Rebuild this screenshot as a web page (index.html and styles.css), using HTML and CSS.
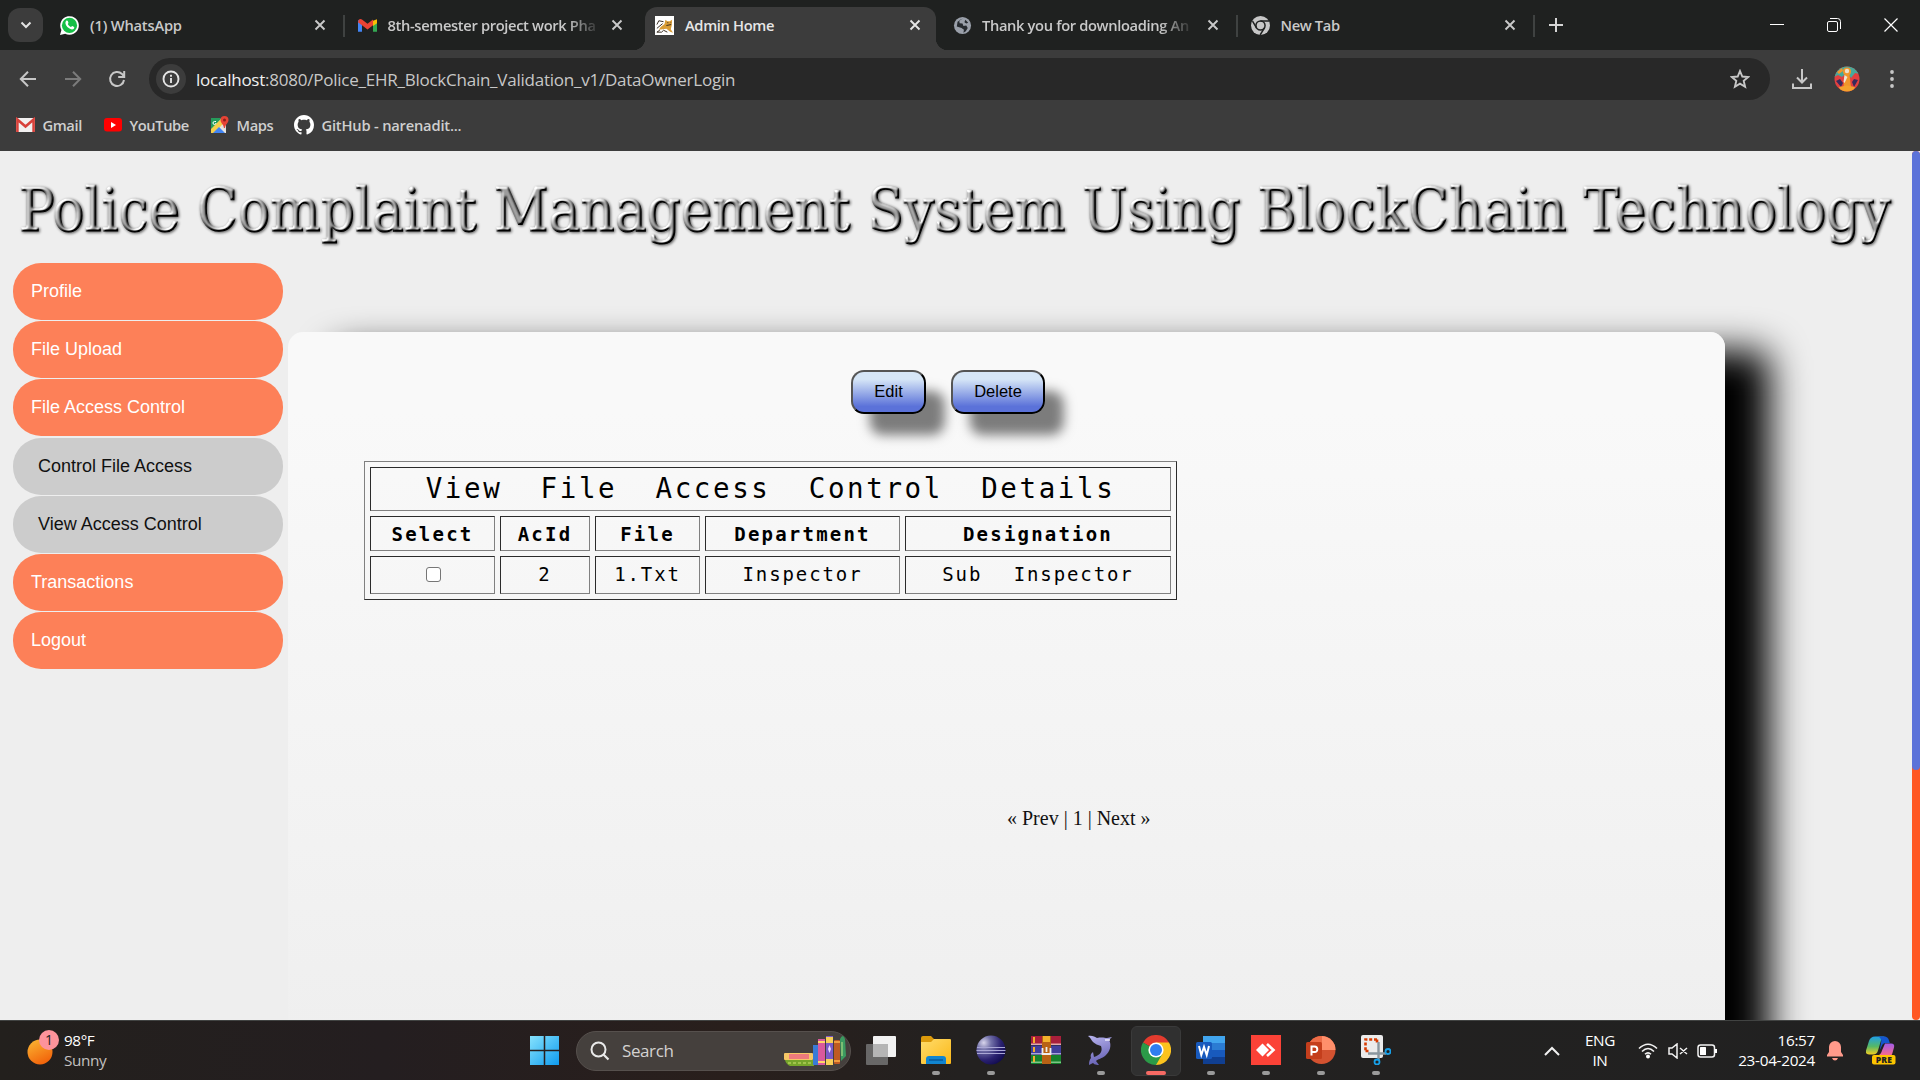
FILE: index.html
```html
<!DOCTYPE html>
<html lang="en">
<head>
<meta charset="utf-8">
<title>Admin Home</title>
<link rel="stylesheet" href="styles.css">
</head>
<body>
<svg class="defs" width="0" height="0" aria-hidden="true">
  <defs>
    <symbol id="x" viewBox="0 0 12 12"><path d="M1.5 1.5l9 9M10.5 1.5l-9 9" fill="none" stroke="currentColor" stroke-width="1.9"/></symbol>
    <symbol id="chrome-mono" viewBox="0 0 20 20"><circle cx="10" cy="10" r="10" fill="#c7c7c7"/><circle cx="10" cy="10" r="4.8" fill="none" stroke="#1f2120" stroke-width="1.6"/><path d="M10 5.2h9M5.8 12.4L1.6 5.4M14.2 12.4L9.6 20" stroke="#1f2120" stroke-width="1.6"/></symbol>
    <linearGradient id="sun" x2=".5" y2="1"><stop stop-color="#fbb934"/><stop offset="1" stop-color="#f2660c"/></linearGradient>
    <linearGradient id="win" x2="1" y2="1"><stop stop-color="#86e2fd"/><stop offset="1" stop-color="#0f9bee"/></linearGradient>
    <linearGradient id="fold" x2="1" y2="1"><stop stop-color="#ffdc6b"/><stop offset="1" stop-color="#fbb818"/></linearGradient>
    <radialGradient id="ecl" cx=".25" cy=".25" r=".85"><stop stop-color="#d8d5ec"/><stop offset=".3" stop-color="#7271a8"/><stop offset=".7" stop-color="#2a2170"/><stop offset="1" stop-color="#120c50"/></radialGradient>
    <linearGradient id="dol" x2=".3" y2="1"><stop stop-color="#b9b5ee"/><stop offset="1" stop-color="#6964b6"/></linearGradient>
    <linearGradient id="copA" x2="0" y2="1"><stop stop-color="#1fa0e8"/><stop offset=".55" stop-color="#55b866"/><stop offset="1" stop-color="#f2cd22"/></linearGradient>
    <linearGradient id="copB" x2="0" y2="1"><stop stop-color="#a15ce8"/><stop offset="1" stop-color="#fb6a8b"/></linearGradient>
  </defs>
</svg>

<header class="tabstrip">
  <button class="tab-search"><svg width="12" height="8" viewBox="0 0 12 8"><path d="M1.5 1.5L6 6l4.500-4.500" fill="none" stroke="#e3e3e3" stroke-width="2"/></svg></button>
  <div class="tab first">
    <svg class="fav" viewBox="0 0 20 20"><path d="M0 20l1.500-5.200A9.800 9.800 0 1 1 5.400 18.600z" fill="#fff"/><circle cx="10" cy="9.900" r="8" fill="#16c047"/><path d="M6.400 5.200c.6-.7 1.500-.6 1.800.1l.7 1.700c.1.400-.7 1.100-.7 1.500.7 1.500 1.800 2.500 3.300 3.100.5 0 1-1.200 1.500-1l1.800.9c.5.400.1 1.700-.5 2.200-1.600 1.200-4 .1-5.800-1.500C6.300 10.200 4.800 7.200 6.400 5.200z" fill="#fff"/></svg>
    <span class="tab-label l1">(1) WhatsApp</span><svg class="tab-x"><use href="#x"/></svg>
  </div>
  <div class="tab">
    <svg class="fav" viewBox="0 0 20 20"><path d="M0 4v12.500h4.200V8z" fill="#4285f4"/><path d="M20 4v12.500h-4.200V8z" fill="#34a853"/><path d="M15.800 5l4.200-1.500V7.500l-4.200 3z" fill="#fbbc04"/><path d="M1 3.800C2 2.600 3.500 3 4.200 3.700L10 8.200l5.800-4.500v6.100L10 14.200 4.200 9.800 0 6.500z" fill="#ea4335"/></svg>
    <span class="tab-label l2 fade">8th-semester project work Pha</span><svg class="tab-x"><use href="#x"/></svg>
  </div>
  <div class="tab active">
    <svg class="fav" viewBox="0 0 20 20"><path d="M0 0h20v20H0z" fill="#fff"/><path d="M11 4l2 1.500h2.500L18 4l-.4 6-1 4 2.400 3.500-3-1-4-3-8 1 2-3 4-3z" fill="#d99c35"/><path d="M2 13l6-5M2 9l2-4 5 1M5 15l-3 2h5l2-2 4 2M17 9l-5 1M13 7h1M16.500 7h.5" stroke="#34281d" fill="none"/></svg>
    <span class="tab-label l3">Admin Home</span><svg class="tab-x"><use href="#x"/></svg>
  </div>
  <div class="tab">
    <svg class="fav" viewBox="0 0 20 20"><circle cx="10" cy="10" r="9" fill="#9aa0aa"/><path d="M10.500 2.500l-4 2 .5 3 3 .5 1 2.500 3-.5 1.500 2.500-2 3.500-2.500 1.500.5-3-2.500-2-5-1.500.8-5zM13 4l3 3-2 1-2-1.500z" fill="#262b30"/></svg>
    <span class="tab-label l4 fade">Thank you for downloading An</span><svg class="tab-x"><use href="#x"/></svg>
  </div>
  <div class="tab">
    <svg class="fav"><use href="#chrome-mono"/></svg>
    <span class="tab-label l5">New Tab</span><svg class="tab-x"><use href="#x"/></svg>
  </div>
  <svg class="plus" viewBox="0 0 14 14"><path d="M7 0v14M0 7h14" stroke="#d5d5d5" stroke-width="2"/></svg>
  <div class="winctl">
    <svg width="14" height="14"><path d="M0 6.500h14" stroke="#fff"/></svg>
    <svg width="14" height="14"><rect x=".5" y="3.500" width="10" height="10" rx="1.500" fill="none" stroke="#fff"/><path d="M3 .5h7.500a3 3 0 0 1 3 3V11" fill="none" stroke="#fff"/></svg>
    <svg width="14" height="14"><path d="M.5 .5l13 13M13.500 .5l-13 13" stroke="#fff" stroke-width="1.200"/></svg>
  </div>
</header>

<nav class="toolbar">
  <svg class="nav-i" viewBox="0 0 18 18"><path d="M17 9H2M9 1.800L1.800 9 9 16.200" fill="none" stroke="#c7c7c7" stroke-width="2"/></svg>
  <svg class="nav-i" viewBox="0 0 18 18"><path d="M1 9h15M9 1.800L16.200 9 9 16.200" fill="none" stroke="#7b7b7b" stroke-width="2"/></svg>
  <svg class="nav-i" viewBox="0 0 18 18"><path d="M16 10a7 7 0 1 1-2-6l2 2.500M16.200 1v6h-6" fill="none" stroke="#c7c7c7" stroke-width="2"/></svg>
  <div class="omnibox">
    <span class="info"><svg width="18" height="18"><circle cx="9" cy="9" r="7.500" fill="none" stroke="#e3e3e3" stroke-width="1.900"/><path d="M9 8v5M9 4.800v2" stroke="#e3e3e3" stroke-width="1.900"/></svg></span>
    <span class="url"><b>localhost</b>:8080/Police_EHR_BlockChain_Validation_v1/DataOwnerLogin</span>
    <svg class="star" viewBox="0 0 20 20"><path d="M10 2l2.300 5.500 5.900.5-4.500 3.900 1.400 5.800L10 14.600l-5.100 3.100 1.400-5.800L1.800 8l5.900-.5z" fill="none" stroke="#c7c7c7" stroke-width="1.900"/></svg>
  </div>
  <svg class="dl" viewBox="0 0 20 20"><path d="M10 0v13M5 8.500l5 5 5-5M1 14.500V19h18v-4.500" fill="none" stroke="#c7c7c7" stroke-width="2"/></svg>
  <svg class="avatar" viewBox="0 0 26 26"><clipPath id="av"><circle cx="13" cy="13" r="12.500"/></clipPath><g clip-path="url(#av)"><path d="M0 0h26v26H0z" fill="#e2403f"/><path d="M0 0h26v8l-5-1-4 5-4-6-5 5-4-2-4 2z" fill="#46a99c"/><path d="M3 6l5-4 1 3-4 3z" fill="#f0962b"/><path d="M2 15l4-2 3 4-2 4zM24 14l-4-1-2 3 2 5z" fill="#382a5c"/><circle cx="13" cy="5.500" r="4" fill="#f0962b"/><path d="M10.500 9h5l1.500 12H9.500z" fill="#f0962b"/><path d="M5 21l8-1.500 8 1.500-2 5H7z" fill="#f4a12d"/><circle cx="13" cy="5" r="2.200" fill="#ede0cc"/><path d="M10.500 9l3 2-3 6-1-1z" fill="#efe4d4"/></g></svg>
  <svg class="dots" viewBox="0 0 4 18"><circle cx="2" cy="2" r="1.900"/><circle cx="2" cy="9" r="1.900"/><circle cx="2" cy="16" r="1.900"/></svg>
</nav>

<nav class="bookmarks">
  <span class="bm b1"><svg width="19" height="16" viewBox="0 0 19 16"><rect y="1" width="19" height="14" rx="1" fill="#f2f0f0"/><path d="M1.400 15V2.500l8.100 7 8.100-7V15" fill="none" stroke="#d8413a" stroke-width="2.600"/></svg><span>Gmail</span></span>
  <span class="bm b2"><svg width="18" height="14" viewBox="0 0 18 14"><rect width="18" height="13.500" rx="3" fill="#f00"/><path d="M7 4v6l5-3z" fill="#fff"/></svg><span>YouTube</span></span>
  <span class="bm b3"><svg width="19" height="19" viewBox="0 0 19 19"><path d="M1 2h15v15H1z" fill="#e9e6df"/><path d="M1 2h11L1 14z" fill="#269b5b"/><path d="M1 13L11 3l3 4L4 17H1z" fill="#f5ce4a"/><path d="M3 17l6-6 6 6z" fill="#4285f4"/><path d="M11 10l5 5V8z" fill="#dedede"/><path d="M6 5.500H4.500A1.500 1.500 0 1 0 6 7" stroke="#fff" fill="none"/><path d="M14.500 0a4 4 0 0 1 4 4c0 3-3 4-3.500 8h-1c-.5-4-3.500-5-3.500-8a4 4 0 0 1 4-4z" fill="#e64335"/><circle cx="14.500" cy="4" r="1.500" fill="#8c1f19"/></svg><span>Maps</span></span>
  <span class="bm b4"><svg width="20" height="20" viewBox="0 0 16 16"><path fill="#fff" d="M8 0C3.580 0 0 3.580 0 8c0 3.540 2.290 6.530 5.470 7.590.4.070.55-.17.55-.38 0-.19-.01-.82-.01-1.490-2.010.37-2.530-.49-2.690-.94-.09-.23-.48-.94-.82-1.130-.28-.15-.68-.52-.01-.53.63-.01 1.080.58 1.230.82.72 1.210 1.870.87 2.330.66.07-.52.28-.87.51-1.070-1.780-.2-3.640-.89-3.640-3.950 0-.87.31-1.590.82-2.150-.08-.2-.36-1.020.08-2.120 0 0 .67-.21 2.200.82.64-.18 1.320-.27 2-.27s1.360.09 2 .27c1.530-1.040 2.200-.82 2.200-.82.44 1.100.16 1.920.08 2.120.51.56.82 1.270.82 2.150 0 3.070-1.870 3.750-3.650 3.950.29.25.54.73.54 1.480 0 1.070-.01 1.930-.01 2.200 0 .21.15.46.55.38A8.010 8.010 0 0 0 16 8c0-4.420-3.580-8-8-8z"/></svg><span>GitHub - narenadit...</span></span>
</nav>

<div class="viewport">
  <main class="page">
    <h1 class="banner">
      <svg width="1912" height="112" viewBox="0 0 1912 112">
        <defs>
          <filter id="bevel" filterUnits="userSpaceOnUse" x="0" y="0" width="1912" height="112" color-interpolation-filters="sRGB">
            <feGaussianBlur in="SourceAlpha" stdDeviation="1" result="b"/>
            <feDiffuseLighting in="b" surfaceScale="2.600" diffuseConstant="1.050" lighting-color="#fff" result="lit"><feDistantLight azimuth="235" elevation="36"/></feDiffuseLighting>
            <feComposite in="lit" in2="SourceAlpha" operator="in" result="face"/>
            <feGaussianBlur in="SourceAlpha" stdDeviation="1.500" result="s"/>
            <feOffset in="s" dx=".5" dy=".5" result="so"/>
            <feComponentTransfer in="so" result="sh"><feFuncA type="linear" slope=".65"/></feComponentTransfer>
            <feMerge><feMergeNode in="sh"/><feMergeNode in="face"/></feMerge>
          </filter>
        </defs>
        <text class="banner-text" x="19" y="80" textLength="1872" lengthAdjust="spacingAndGlyphs" filter="url(#bevel)">Police Complaint Management System Using BlockChain Technology</text>
      </svg>
    </h1>
    <div class="columns">
      <ul class="menu">
        <li>Profile</li>
        <li>File Upload</li>
        <li>File Access Control</li>
        <li class="sub sub-first">Control File Access</li>
        <li class="sub">View Access Control</li>
        <li>Transactions</li>
        <li>Logout</li>
      </ul>
      <section class="panel">
        <div class="actions"><button>Edit</button><button>Delete</button></div>
        <div class="grid">
          <div class="cell title">View&nbsp; File&nbsp; Access&nbsp; Control&nbsp; Details</div>
          <div class="cell head">Select</div><div class="cell head">AcId</div><div class="cell head">File</div><div class="cell head">Department</div><div class="cell head">Designation</div>
          <div class="cell data"><span class="check"></span></div><div class="cell data">2</div><div class="cell data">1.Txt</div><div class="cell data">Inspector</div><div class="cell data wide">Sub Inspector</div>
        </div>
        <p class="pager">« Prev | 1 | Next »</p>
      </section>
    </div>
  </main>
  <div class="scrollbar"><div class="thumb"></div></div>
</div>

<footer class="taskbar">
  <div class="weather">
    <svg width="34" height="36" viewBox="0 0 34 36"><circle cx="13" cy="23" r="12.500" fill="url(#sun)"/><circle cx="22" cy="11" r="10" fill="#fd939b"/><text x="22" y="16" text-anchor="middle" class="badge">1</text></svg>
    <div class="two"><span>98°F</span><span class="dim">Sunny</span></div>
  </div>
  <svg class="start" viewBox="0 0 30 30"><path d="M0 0h14.200v14.200H0zM15.800 0H30v14.200H15.800zM0 15.800h14.200V30H0zM15.800 15.800H30V30H15.800z" fill="url(#win)"/></svg>
  <div class="search">
    <svg width="20" height="20" viewBox="0 0 20 20"><circle cx="8.500" cy="8.500" r="7" fill="none" stroke="#e9e9e9" stroke-width="2"/><path d="M13.500 13.500l5 5" stroke="#e9e9e9" stroke-width="2.200"/></svg>
    <span>Search</span>
    <svg class="books" width="63" height="30" viewBox="0 0 63 30"><rect y="17" width="29" height="7" rx="1" fill="#f6c766"/><rect x="5" y="18" width="20" height="5" fill="#ee7a7d"/><path d="M1 24h29v6H6q-4-2-5-6z" fill="#76a52b"/><path d="M4 27h24" stroke="#cde26e" stroke-dasharray="3 2"/><rect x="29" y="9" width="5" height="20" fill="#3a7bd6"/><rect x="34" y="3" width="7" height="26" fill="#d9599c"/><path d="M34 6h7M34 26h7" stroke="#ffd569" stroke-width="2"/><rect x="42" width="7" height="29" fill="#7c5ac7"/><path d="M42 1h7v6h-7zM42 23h7v6h-7z" fill="#f7cf59"/><path d="M45.500 9l1.500 4-1.500 4-1.500-4z" fill="#e9dcff"/><rect x="50" y="4" width="6" height="24" rx="1" fill="#bf5a22"/><path d="M50 6h6M50 25h6" stroke="#ef9b3d" stroke-width="2"/><path d="M56 3q3-6 5 0l1 17-5 5z" fill="#3b9a60"/><path d="M58 6v14" stroke="#bfe287"/></svg>
  </div>
  <div class="apps">
    <div class="app"><svg viewBox="0 0 30 30"><rect x="7" y="1" width="23" height="21" rx="1" fill="#f2f2f2"/><rect y="9" width="22" height="21" rx="1" fill="#777" fill-opacity=".82"/><path d="M7 9h15v13H7z" fill="#b5b5b5"/></svg></div>
    <div class="app run"><svg viewBox="0 0 30 30"><path d="M0 3q0-2 2-2h8l3 3h6v7H0z" fill="#dc9a0b"/><path d="M0 7h10l3-3h16q1 0 1 1v23q0 1-1 1H1q-1 0-1-1z" fill="url(#fold)"/><path d="M5 29v-5q0-3 3-3h14q3 0 3 3v5z" fill="#1185d0"/><path d="M8 25h14" stroke="#075a9c" stroke-width="1.500"/></svg></div>
    <div class="app run"><svg viewBox="0 0 30 30"><circle cx="15" cy="15" r="14.500" fill="url(#ecl)"/><path d="M1 12.500h28M.5 15.500h29M1 18.500h28" stroke="#aaa7d5" stroke-width="1"/></svg></div>
    <div class="app"><svg viewBox="0 0 30 30"><rect y="1" width="30" height="9" fill="#a91f3b"/><path d="M0 8.500h30V10H0z" fill="#e3a8ac"/><rect y="10.500" width="30" height="9" fill="#423e9b"/><path d="M0 18h30v1.500H0z" fill="#a8a4dc"/><rect y="20" width="30" height="9" fill="#16812c"/><path d="M0 26.500h30V28H0z" fill="#7dc487"/><path d="M3 2v6M3 12v5M3 21v6" stroke="#f4b02b" stroke-width="2"/><rect x="11" y="1" width="9" height="28" fill="#b86215"/><path d="M12 1h7v6h-7z" fill="#f4b22d"/><path d="M11.500 13v6h8v-6M15.500 12v5" fill="none" stroke="#eee" stroke-width="1.800"/></svg></div>
    <div class="app run"><svg viewBox="0 0 30 30"><path d="M2 1c4-1 7 1 9 2 5-1 8 0 10 0l5-1-3 3c3 5 1 12-4 16-4 3-7 3-9 5l3 4c-4 0-5-1-6-2l-4 2c0-4 1-6 2-7-1-4 1-5 2-6l1 5c6-2 9-5 7-11-3-1-6-2-8-4-2-2-2-4-5-6z" fill="url(#dol)"/><path d="M19 5l5 0" stroke="#eeebfd" stroke-width="1.500"/></svg></div>
    <div class="app run on"><svg viewBox="0 0 30 30"><path d="M15 15L2 7.500A15 15 0 0 1 28 7.500z" fill="#e33b2e"/><path d="M15 15V7.500h13A15 15 0 0 1 14.900 30z" fill="#fcc31e"/><path d="M15 15l6.500 3.800L15 30A15 15 0 0 1 2 7.500z" fill="#2b9a48"/><circle cx="15" cy="15" r="7.600" fill="#fff"/><circle cx="15" cy="15" r="6" fill="#2f7df0"/></svg></div>
    <div class="app run"><svg viewBox="0 0 30 30"><path d="M7 1h22v8H7z" fill="#41a5ee"/><path d="M7 8h22v8H7z" fill="#2b7cd3"/><path d="M7 15h22v7H7z" fill="#185abd"/><path d="M7 22h22v7H7z" fill="#103f91"/><rect y="7" width="16" height="17" rx="1.500" fill="#185abd"/><path d="M3 11l2.300 9L8 12l2.700 8L13 11" fill="none" stroke="#fff" stroke-width="2"/></svg></div>
    <div class="app run"><svg viewBox="0 0 30 30"><path d="M0 0h30v30H0z" fill="#fb4237"/><path d="M5 15l6.500-6.500L18 15l-6.500 6.500z" fill="#fff"/><path d="M16 9l6.500 6-6.500 6" fill="none" stroke="#fff" stroke-width="2.600"/></svg></div>
    <div class="app run"><svg viewBox="0 0 30 30"><circle cx="15.500" cy="15" r="14" fill="#d35230"/><path d="M15.500 1a14 14 0 0 1 14 14h-14z" fill="#ff8f6b"/><path d="M15.500 1v14h-14a14 14 0 0 1 14-14z" fill="#ed6c47"/><rect y="7" width="16" height="17" rx="1.500" fill="#c43e1c"/><path d="M5.500 20.500v-9h3q2.800 0 2.800 2.800T8.500 17h-3" fill="none" stroke="#fff" stroke-width="2"/></svg></div>
    <div class="app run"><svg viewBox="0 0 30 30"><rect width="22" height="23" rx="2" fill="#ececec"/><path d="M16 4.500H4.500V16M16 4.500V8M4.500 16H9" fill="none" stroke="#d83b01" stroke-width="2.600" stroke-dasharray="3 1.800"/><path d="M17.500 7v18M7 18.500h18" stroke="#8b979f" stroke-width="2.400"/><circle cx="16" cy="27" r="2.500" fill="none" stroke="#18a0e8" stroke-width="1.800"/><circle cx="27" cy="16.500" r="2.500" fill="none" stroke="#18a0e8" stroke-width="1.800"/></svg></div>
  </div>
  <div class="tray">
    <svg width="16" height="10" viewBox="0 0 16 10"><path d="M1 9l7-7 7 7" fill="none" stroke="#f2f2f2" stroke-width="2"/></svg>
    <div class="two lang"><span>ENG</span><span>IN</span></div>
    <svg class="wifi" width="20" height="16" viewBox="0 0 20 16"><g fill="none" stroke="#f2f2f2" stroke-width="1.600"><path d="M1 5.500q9-8.500 18 0M4 8.500q6-6 12 0M7 11.300q3-3 6 0"/></g><circle cx="10" cy="13.500" r="2" fill="#fff"/></svg>
    <svg class="mute" width="20" height="16" viewBox="0 0 20 16"><path d="M1 5h3l5-4v14l-5-4H1zM12 5l7 6M19 5l-7 6" fill="none" stroke="#f2f2f2" stroke-width="1.500"/></svg>
    <svg class="batt" width="21" height="14" viewBox="0 0 21 14"><rect x="1" y="1" width="16.500" height="12" rx="2.500" fill="none" stroke="#f2f2f2" stroke-width="1.500"/><rect x="3" y="3" width="6" height="8" rx=".5" fill="#fff"/><path d="M18 5h2v4h-2z" fill="#fff"/></svg>
    <div class="two clock"><span>16:57</span><span>23-04-2024</span></div>
    <svg class="bell" width="16" height="20" viewBox="0 0 16 20"><path d="M8 0a6 6 0 0 1 6 6v5l2 3v1.500H0V14l2-3V6a6 6 0 0 1 6-6zM5 17h6q-1 2.500-3 2.500T5 17z" fill="#ff9a8b"/></svg>
    <svg class="copilot" width="30" height="29" viewBox="0 0 30 29"><path d="M3 5q1.500-4.500 6-4.500h11q-4 0-5 4l-3 10q-1 4-5 4H3q-4 0-3-4z" fill="url(#copA)"/><path d="M12 .5h6q4 0 5 4l.8 2.500h-4q-3 0-4 3l-2 4 1.500-9q0-3-3.300-4.500z" fill="#1556cf"/><path d="M19 7.500h6q4 0 3 4l-2 7q-1 1-2 1H12q3-1 4-5z" fill="url(#copB)"/><rect x="6" y="19" width="23.500" height="9.500" rx="2" fill="#fdc400"/><text x="18" y="26.800" text-anchor="middle" class="pre">PRE</text></svg>
  </div>
</footer>
</body>
</html>
```
FILE: styles.css
```css
* { box-sizing: border-box; }
body {
  margin: 0;
  width: 1920px;
  height: 1080px;
  overflow: hidden;
  display: flex;
  flex-direction: column;
  background: #3c3c3c;
  font-family: "Open Sans", "Noto Sans", sans-serif;
}
svg { display: block; flex: none; }
button { font: inherit; }
.defs { position: absolute; }

/* Tab strip */
.tabstrip {
  height: 50px;
  flex: none;
  display: flex;
  align-items: flex-start;
  padding: 8px 22px 0 8px;
  background: #1f2120;
  color: #c9c9c9;
}
.tab-search {
  width: 35px;
  height: 34px;
  border: 0;
  padding: 0;
  border-radius: 12px;
  background: #3c3c3c;
  display: flex;
  align-items: center;
  justify-content: center;
}
.tab {
  width: 297.500px;
  height: 34px;
  display: flex;
  align-items: center;
  padding: 0 17px 0 13px;
  border-right: 2px solid transparent;
  border-image: linear-gradient(transparent 22%, #3f4241 22% 82%, transparent 82%) 1;
}
.tab.first { margin-left: 4px; }
.tab:has(+ .active) { border-image: none; }
.tab.active {
  position: relative;
  height: 43px;
  margin-top: -1px;
  padding: 0 15px 7px 10px;
  margin-left: 3px;
  width: 291px;
  margin-right: 4px;
  background: #3c3c3c;
  border: 0;
  border-image: none;
  border-radius: 12px 12px 0 0;
  color: #e6e6e6;
}
.tab.active::before,
.tab.active::after {
  content: "";
  position: absolute;
  bottom: 0;
  width: 12px;
  height: 12px;
}
.tab.active::before { left: -12px; background: radial-gradient(circle at 0 0, transparent 12px, #3c3c3c 12.500px); }
.tab.active::after { right: -12px; background: radial-gradient(circle at 100% 0, transparent 12px, #3c3c3c 12.500px); }
.fav { width: 19px; height: 19px; }
.tab-label {
  margin-left: 11px;
  white-space: nowrap;
  font-size: 14.700px;
  font-weight: 600;
  letter-spacing: -.35px;
}
.l1 { letter-spacing: -.2px; }
.l4 { margin-left: 10px; }
.fade { mask-image: linear-gradient(90deg, #000 86%, rgba(0, 0, 0, .15)); }
.tab-x { width: 12px; height: 12px; margin-left: auto; }
.plus { width: 14px; height: 14px; margin: 10px 0 0 14px; }
.winctl { margin: 10px 0 0 auto; display: flex; gap: 43px; }

/* Toolbar */
.toolbar {
  height: 58px;
  flex: none;
  display: flex;
  align-items: center;
  padding: 0 26px 0 19px;
  background: #3c3c3c;
}
.nav-i { width: 18px; height: 18px; margin-right: 26.500px; }
.omnibox {
  width: 1621px;
  height: 42px;
  margin-left: -3.500px;
  display: flex;
  align-items: center;
  padding: 0 20px 0 7px;
  border-radius: 21px;
  background: #282828;
}
.info {
  width: 30px;
  height: 30px;
  display: flex;
  align-items: center;
  justify-content: center;
  border-radius: 50%;
  background: #3c3c3c;
}
.url { margin-left: 10px; font-size: 17px; color: #c7c7c7; letter-spacing: -.24px; }
.url b { font-weight: 400; color: #f0f0f0; }
.star { width: 20px; height: 20px; margin-left: auto; }
.dl { width: 20px; height: 20px; margin-left: 22px; }
.avatar { width: 26px; height: 26px; margin-left: 22px; }
.dots { width: 4px; height: 18px; margin-left: auto; fill: #c7c7c7; }

/* Bookmarks */
.bookmarks {
  height: 43px;
  flex: none;
  display: flex;
  padding: 0 0 9px 16px;
  color: #cfcfcf;
  font-size: 14.700px;
  font-weight: 600;
  letter-spacing: -.4px;
}
.bm { display: flex; align-items: center; gap: 7.500px; white-space: nowrap; }
.b1 { width: 88px; }
.b2 { width: 106px; }
.b3 { width: 84px; }
.b4 { letter-spacing: -.2px; }

/* Page */
.viewport { height: 869px; flex: none; display: flex; background: #eee; overflow: hidden; }
.page { width: 1912px; overflow: hidden; }
.banner { margin: 0; height: 112px; }
.banner-text {
  font-family: "DejaVu Serif Condensed", "DejaVu Serif", serif;
  font-stretch: condensed;
  font-weight: 400;
  font-size: 59px;
  stroke: #000;
  stroke-width: 1.100px;
}
.columns { display: flex; padding-left: 13px; }
.menu {
  position: relative;
  z-index: 1;
  width: 270px;
  margin: 0;
  padding: 0;
  list-style: none;
  font: 18px "Liberation Sans", Arial, sans-serif;
}
.menu li {
  height: 57px;
  margin-bottom: 1px;
  padding: 0 18px;
  display: flex;
  align-items: center;
  border-radius: 28px;
  background: #fd8058;
  color: #fff;
}
.menu .sub { padding-left: 25px; background: #ccc; color: #111; }
.menu .sub-first { margin-top: 2px; }
.panel {
  width: 1437px;
  height: 1100px;
  margin: 69px 0 0 5px;
  padding: 38px 76px 0;
  border-radius: 15px;
  background: linear-gradient(#f9f9f9 80px, #eee 760px);
  box-shadow: 45px 18px 37px #000;
}
.actions { display: flex; gap: 25px; margin-left: 487px; }
.actions button {
  height: 44px;
  padding: 0 21px 2px;
  border: 2px outset #000;
  border-color: #555 #000 #000 #555;
  border-radius: 13px;
  background: linear-gradient(#d6e6f7 18%, #5b72d9 86%);
  box-shadow: 18.750px 21px 12px rgba(0, 0, 0, .5);
  font: 16.500px "Liberation Sans", Arial, sans-serif;
  color: #000;
}
.actions button:first-child { width: 75px; }
.actions button:last-child { width: 94px; }
.grid {
  width: 813px;
  margin-top: 47px;
  display: grid;
  grid-template-columns: 125px 90px 105px 195px 266px;
  grid-template-rows: 44px 35px 38px;
  gap: 5px;
  padding: 5px;
  border: 1px solid;
  border-color: #808080 #2b2b2b #2b2b2b #808080;
  font-family: "DejaVu Sans Mono", "Liberation Mono", monospace;
  font-size: 19px;
  letter-spacing: 1.900px;
}
.cell {
  display: flex;
  align-items: center;
  justify-content: center;
  white-space: nowrap;
  border: 1px solid;
  border-color: #2b2b2b #808080 #808080 #2b2b2b;
}
.title { grid-column: 1 / -1; padding-bottom: 2px; font-size: 27.500px; letter-spacing: 2.600px; }
.head { font-weight: 700; letter-spacing: 2.200px; }
.data { padding-bottom: 2px; }
.wide { word-spacing: 18px; }
.check { width: 15px; height: 15px; margin-left: 1px; border: 1px solid #767676; border-radius: 3px; background: #fff; }
.pager {
  margin: 206px 0 0 643px;
  font: 20px/24px "Liberation Serif", "Times New Roman", serif;
  color: #111;
}
.scrollbar { width: 8px; background: #ff5722; border-radius: 4px; }
.thumb { height: 619px; border-radius: 4px; background: #5b72d9; }

/* Taskbar */
.taskbar {
  height: 60px;
  flex: none;
  display: flex;
  align-items: center;
  padding: 0 24px 0 27px;
  border-top: 1px solid #414342;
  background: linear-gradient(90deg, #23201d, #241e20 20%, #291f1c 38%, #232120 50%, #212121);
  color: #fff;
  font-size: 15.300px;
}
.weather { width: 503px; display: flex; align-items: center; gap: 3px; }
.weather svg { margin-top: -8px; }
.badge { font-size: 14px; fill: #222; }
.two { display: flex; flex-direction: column; margin-top: -2px; line-height: 20px; letter-spacing: -.4px; }
.dim { color: #c4c2c1; }
.start { width: 29px; height: 29px; }
.search {
  width: 275px;
  height: 40px;
  margin-left: 17px;
  display: flex;
  align-items: center;
  padding: 0 3px 0 13px;
  border: 1px solid #56504d;
  border-radius: 20px;
  background: #45403d;
  font-size: 17px;
  color: #d4d2d1;
}
.search span { margin-left: 12px; letter-spacing: -.4px; }
.books { margin-left: auto; }
.apps { display: flex; gap: 5px; margin-left: 5px; }
.app {
  position: relative;
  width: 50px;
  height: 50px;
  display: flex;
  align-items: center;
  justify-content: center;
  border: 1px solid transparent;
  border-radius: 6px;
}
.app svg { width: 30px; height: 30px; margin-top: -1px; }
.app.on { background: #303030; border-color: #3a3a3a; }
.run::after {
  content: "";
  position: absolute;
  bottom: 0;
  left: 20px;
  width: 8px;
  height: 4px;
  border-radius: 2px;
  background: #9a9a9a;
}
.run.on::after { left: 14px; width: 20px; background: #f66a64; }
.tray { margin-left: auto; display: flex; align-items: center; }
.lang { width: 42px; margin-left: 19px; align-items: center; }
.wifi { margin-left: 17px; }
.mute { margin-left: 10px; }
.batt { margin-left: 9px; }
.clock { width: 84px; margin-left: 13px; align-items: flex-end; white-space: nowrap; letter-spacing: -.3px; }
.bell { margin-left: 12px; }
.copilot { margin-left: 23px; }
.pre { font: 800 8.500px "Open Sans", sans-serif; fill: #222; letter-spacing: .3px; }
```
